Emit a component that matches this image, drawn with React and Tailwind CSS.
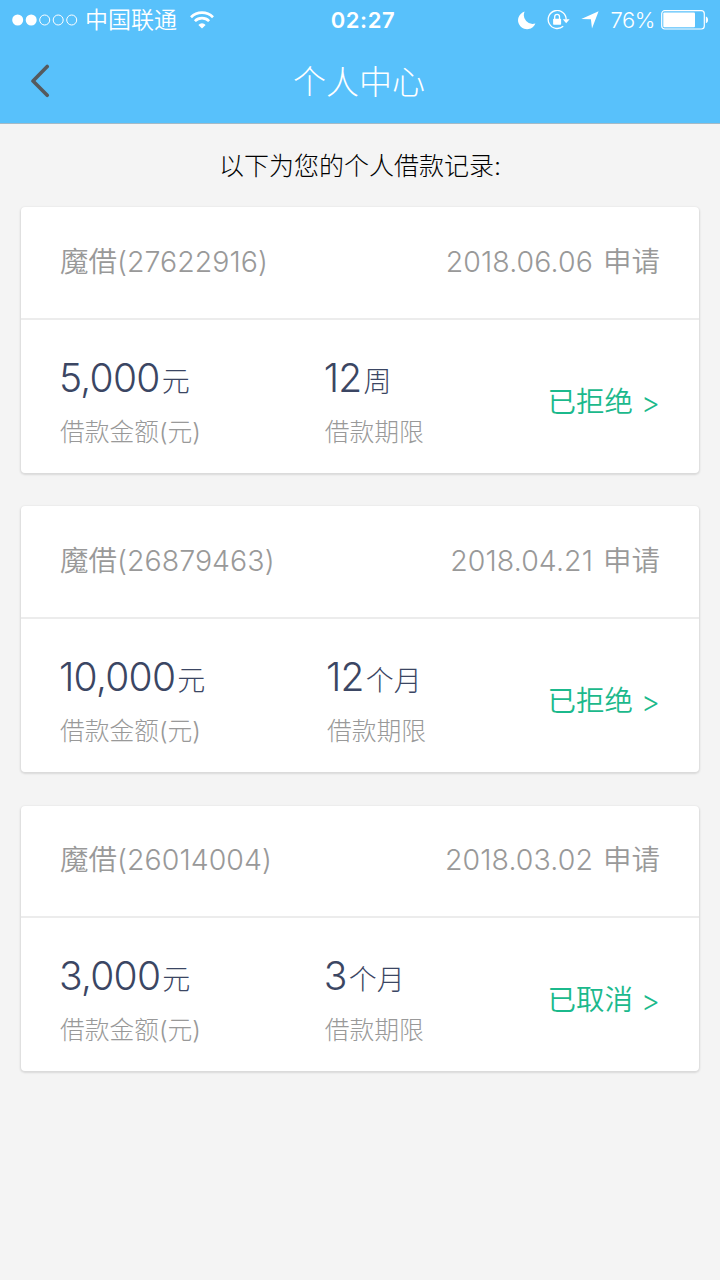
const records = [
  { id: '27622916', date: '2018.06.06', amount: '5,000', term: '12', unit: '周', status: '已拒绝' },
  { id: '26879463', date: '2018.04.21', amount: '10,000', term: '12', unit: '个月', status: '已拒绝' },
  { id: '26014004', date: '2018.03.02', amount: '3,000', term: '3', unit: '个月', status: '已取消' },
];

function StatusBar() {
  return (
    <div className="flex h-10 items-center pl-3 pr-[11px] text-white">
      <div className="flex flex-1 items-center">
        <svg width="66" height="12" viewBox="0 0 66 12" fill="none" stroke="white">
          <circle cx="5.7" cy="6" r="5.5" fill="white" stroke="none" />
          <circle cx="19.2" cy="6" r="5.5" fill="white" stroke="none" />
          <circle cx="32.7" cy="6" r="5" />
          <circle cx="46.2" cy="6" r="5" />
          <circle cx="59.7" cy="6" r="5" />
        </svg>
        <span className="ml-[7px] pt-px text-[23px] leading-[39px] font-[350]">中国联通</span>
        <svg className="ml-[13px]" width="24" height="18" viewBox="0 0 24 18" fill="none" stroke="white" strokeWidth="2.7">
          <path d="M1 6.2a15.6 15.6 0 0 1 22 0" />
          <path d="M4.9 10.1a10.1 10.1 0 0 1 14.2 0" />
          <path d="M12 17.6l-3.6-3.7a5 5 0 0 1 7.2 0z" fill="white" stroke="none" />
        </svg>
      </div>
      <span className="pl-[5px] text-[22px] leading-[40px] font-semibold tracking-[0.6px]">02:27</span>
      <div className="flex flex-1 items-center justify-end">
        <svg width="19" height="19" viewBox="0 0 19 19" fill="white">
          <path d="M7.6.6A9 9 0 1 0 18.4 12.6 8.9 8.9 0 0 1 7.6.6z" />
        </svg>
        <svg className="ml-[11px]" width="23" height="20" viewBox="0 0 23 20" fill="none" stroke="white" strokeWidth="1.3">
          <path d="M16.2 16.2A9 9 0 1 1 19.2 9.5" />
          <path d="M15.8 9.2h6.8l-3.4 4z" fill="white" stroke="none" />
          <rect x="6.1" y="8.8" width="8" height="6" rx=".7" fill="white" stroke="none" />
          <path d="M7.7 9V6.8a2.4 2.4 0 0 1 4.8 0V9" />
        </svg>
        <svg className="ml-[11px]" width="18" height="18" viewBox="0 0 18 18" fill="white">
          <path d="M17.6.3L11 17.6 9.9 8.3.3 7.9z" />
        </svg>
        <span className="ml-[11px] text-[22px] leading-[40px] font-light tracking-[-0.4px]">76%</span>
        <svg className="ml-[6px]" width="48" height="20" viewBox="0 0 48 20" fill="none">
          <rect x=".7" y=".7" width="42.6" height="18.3" rx="3" stroke="white" strokeWidth="1.2" />
          <rect x="2.3" y="2.5" width="31.7" height="14.7" rx="1" fill="white" />
          <path d="M44.8 6.5c3 .8 3 5.9 0 6.7z" fill="white" />
        </svg>
      </div>
    </div>
  );
}

function Figure({ value, unit }) {
  return (
    <p className="h-[55px] leading-[55px] font-light whitespace-nowrap text-[#3b4663]">
      <span className="-ml-px text-[39px] tracking-[-0.75px]">{value}</span>
      <span className="ml-[2px] text-[28px]">{unit}</span>
    </p>
  );
}

function Caption({ children }) {
  return <p className="pt-[2px] text-[24.75px] leading-[50px] font-light text-[#999999]">{children}</p>;
}

function RecordCard({ record }) {
  return (
    <article className="h-[265.5px] rounded-[4px] bg-white shadow-[0_1px_2px_1px_rgba(0,0,0,0.11)]">
      <div className="flex h-[112.5px] items-center justify-between border-b-2 border-[#ececec] px-[39px] text-[28.5px] font-[350] text-[#999999]">
        <span>
          魔借<span className="font-light tracking-[0.05px]">({record.id})</span>
        </span>
        <span className="flex items-center gap-[10px]">
          <span className="font-light tracking-[0.1px]">{record.date}</span>
          <span>申请</span>
        </span>
      </div>
      <div className="flex h-[153px] justify-between px-[39px] pt-[30px]">
        <div>
          <Figure value={record.amount} unit="元" />
          <Caption>借款金额(元)</Caption>
        </div>
        <div>
          <Figure value={record.term} unit={record.unit} />
          <Caption>借款期限</Caption>
        </div>
        <div className="flex gap-[8px] pt-[27px] text-[28.5px] leading-[50px] text-[#1bb98c]">
          <span className="font-[350]">{record.status}</span>
          <span className="pt-px text-[29px] font-light">&gt;</span>
        </div>
      </div>
    </article>
  );
}

export default function App() {
  return (
    <div className="flex min-h-screen w-full flex-col bg-[#f4f4f4] font-['Inter','Noto_Sans_CJK_SC',sans-serif]">
      <header className="h-[124px] border-b border-[#a5bac6] bg-[#58c1fb]">
        <StatusBar />
        <div className="grid h-[82px] grid-cols-[1fr_auto_1fr] items-center px-[30px]">
          <svg width="20" height="34" viewBox="0 0 20 34" fill="none" stroke="#555a5e" strokeWidth="3.6" strokeLinecap="round" strokeLinejoin="round">
            <path d="M17.2 2.5L3 17l14.2 14.3" />
          </svg>
          <h1 className="-ml-[2px] pt-[4px] text-[33px] font-light text-white">个人中心</h1>
        </div>
      </header>
      <main className="px-[21px]">
        <p className="pt-[17px] text-center text-[25px] leading-[50px] font-light text-[#000000]">以下为您的个人借款记录:</p>
        <div className="mt-[16px] flex flex-col gap-[33.8px]">
          {records.map((record) => (
            <RecordCard key={record.id} record={record} />
          ))}
        </div>
      </main>
    </div>
  );
}
